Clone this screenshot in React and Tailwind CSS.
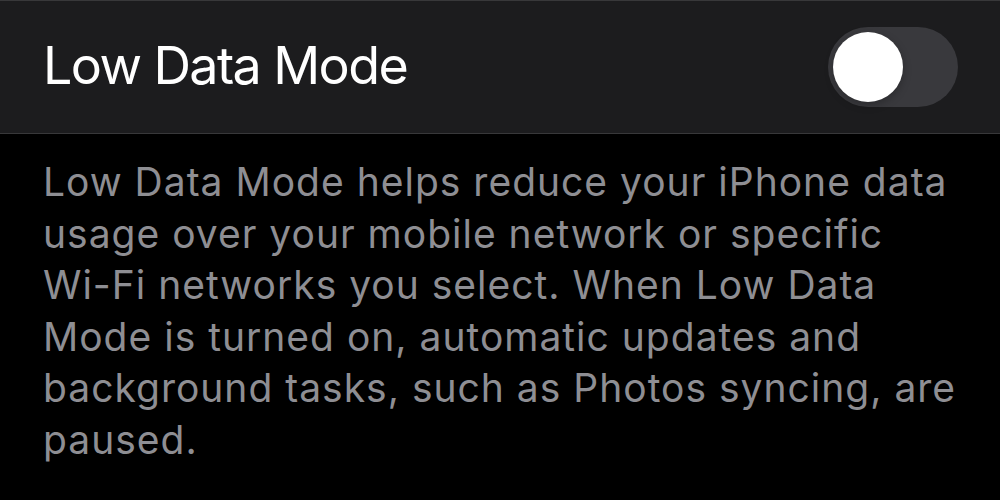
export default function App() {
  return (
    <div className="w-[1000px] h-[500px] bg-black overflow-hidden" style={{ fontFamily: 'Inter, "Noto Sans", sans-serif' }}>
      <div className="h-[134px] bg-[#1c1c1e] border-t border-b border-[#38383a] flex items-center justify-between pl-[43px] pr-[42px]">
        <span className="text-white text-[52px] leading-none tracking-[-1.6px] pb-[2px]">Low Data Mode</span>
        <div className="w-[130px] h-[80px] rounded-full bg-[#39393d] flex items-center pl-[5px]">
          <div className="w-[70px] h-[70px] rounded-full bg-white shadow-[0_3px_8px_rgba(0,0,0,0.25)]" />
        </div>
      </div>
      <p className="pl-[43px] pt-[22px] text-[#8e8e93] text-[39px] leading-[51.5px] tracking-[1px] whitespace-nowrap">
        Low Data Mode helps reduce your iPhone data<br />
        usage over your mobile network or specific<br />
        Wi-Fi networks you select. When Low Data<br />
        Mode is turned on, automatic updates and<br />
        background tasks, such as Photos syncing, are<br />
        paused.
      </p>
    </div>
  );
}
